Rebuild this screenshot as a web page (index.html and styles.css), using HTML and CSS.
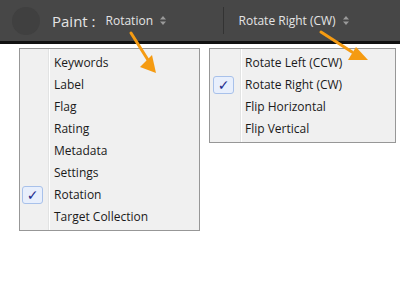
FILE: index.html
```html
<!DOCTYPE html>
<html lang="en">
  <head>
    <title>Painter menus</title>
    <meta charset="utf-8" />
    <link rel="stylesheet" href="styles.css">
  </head>

  <body>
    <div class="bar">
      <div class="bar__knob"></div>
      <span class="bar__label">Paint :</span>
      <span class="bar__select bar__select--mode">Rotation
        <svg class="bar__updown" width="6" height="9" viewBox="0 0 6 9"><path d="M3 0 L6 3.5 H0 Z M3 9 L6 5.5 H0 Z" fill="#9a9a9a"/></svg>
      </span>
      <div class="bar__divider"></div>
      <span class="bar__select">Rotate Right (CW)
        <svg class="bar__updown" width="6" height="9" viewBox="0 0 6 9"><path d="M3 0 L6 3.5 H0 Z M3 9 L6 5.5 H0 Z" fill="#9a9a9a"/></svg>
      </span>
    </div>

    <div class="menus">
      <ul class="menu menu--mode">
        <li class="menu__item">Keywords</li>
        <li class="menu__item">Label</li>
        <li class="menu__item">Flag</li>
        <li class="menu__item">Rating</li>
        <li class="menu__item">Metadata</li>
        <li class="menu__item">Settings</li>
        <li class="menu__item menu__item--checked">Rotation</li>
        <li class="menu__item">Target Collection</li>
      </ul>

      <ul class="menu menu--rotate">
        <li class="menu__item">Rotate Left (CCW)</li>
        <li class="menu__item menu__item--checked">Rotate Right (CW)</li>
        <li class="menu__item">Flip Horizontal</li>
        <li class="menu__item">Flip Vertical</li>
      </ul>
    </div>

    <svg class="arrows" width="400" height="300" viewBox="0 0 400 300">
      <g stroke="#f59b12" stroke-width="3" fill="#f59b12" stroke-linecap="round">
        <line x1="131" y1="33" x2="148" y2="60" />
        <path d="M140 67 L152 55 L156 73 Z" stroke="none" />
        <line x1="321" y1="32" x2="352" y2="52" />
        <path d="M348 60 L356 47 L368 60 Z" stroke="none" />
      </g>
    </svg>
  </body>
</html>
```

FILE: styles.css
```css
body {
  margin: 0;
  background: #fff;
  font-family: "Open Sans", "Noto Sans", sans-serif;
  font-size: 12px;
}

.bar {
  display: flex;
  align-items: center;
  height: 41px;
  background: #474747;
  border-bottom: 3px solid #111;
  color: #e4e4e4;
}

.bar__knob {
  width: 28px;
  height: 28px;
  margin-left: 12px;
  border-radius: 50%;
  background: #404040;
}

.bar__label {
  margin-left: 12px;
  font-size: 15px;
}

.bar__select {
  display: flex;
  align-items: center;
  margin-left: 14px;
}

.bar__select--mode {
  width: 117px;
  margin-left: 10px;
}

.bar__updown {
  margin-left: 7px;
}

.bar__divider {
  width: 1px;
  height: 27px;
  background: #333;
  margin-right: 1px;
}

.menus {
  display: flex;
  align-items: flex-start;
  gap: 9px;
  padding: 4px 0 0 19px;
}

.menu {
  list-style: none;
  margin: 0;
  padding: 3px 0 2px;
  background: #f0f0f0 linear-gradient(to right, transparent 28px, #e2e3e3 28px, #e2e3e3 29px, #fff 29px, #fff 30px, transparent 30px);
  border: 1px solid #979797;
  color: #1a1a1a;
}

.menu--mode {
  width: 179px;
}

.menu--rotate {
  width: 185px;
  background-image: linear-gradient(to right, transparent 30px, #e2e3e3 30px, #e2e3e3 31px, #fff 31px, #fff 32px, transparent 32px);
}

.menu__item {
  position: relative;
  height: 22px;
  line-height: 22px;
  padding-left: 34px;
  white-space: nowrap;
}

.menu--rotate .menu__item {
  padding-left: 35px;
}

.menu__item--checked::before {
  content: "\2713";
  position: absolute;
  left: 2px;
  top: 2px;
  width: 19px;
  height: 16px;
  line-height: 16px;
  text-align: center;
  font-family: "DejaVu Sans", sans-serif;
  font-size: 14px;
  color: #1d2b8c;
  background: #e8effc;
  border: 1px solid #a8c1ea;
  border-radius: 3px;
}

.menu--rotate .menu__item--checked::before {
  left: 3px;
}

.arrows {
  position: absolute;
  left: 0;
  top: 0;
  pointer-events: none;
}
```
